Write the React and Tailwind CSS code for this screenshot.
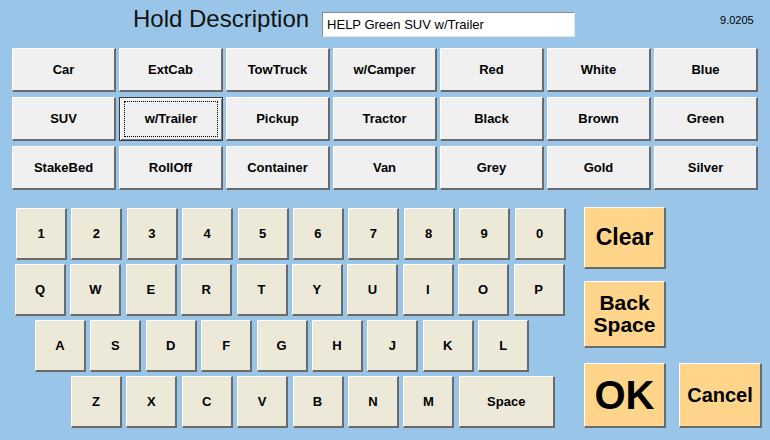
import React from 'react'

const categories = [
  'Car', 'ExtCab', 'TowTruck', 'w/Camper', 'Red', 'White', 'Blue',
  'SUV', 'w/Trailer', 'Pickup', 'Tractor', 'Black', 'Brown', 'Green',
  'StakeBed', 'RollOff', 'Container', 'Van', 'Grey', 'Gold', 'Silver',
]

const keyRows = [
  { pad: 'pl-[16px]', keys: ['1', '2', '3', '4', '5', '6', '7', '8', '9', '0'] },
  { pad: 'pl-[15px]', keys: ['Q', 'W', 'E', 'R', 'T', 'Y', 'U', 'I', 'O', 'P'] },
  { pad: 'pl-[35px]', keys: ['A', 'S', 'D', 'F', 'G', 'H', 'J', 'K', 'L'] },
  { pad: 'pl-[71px]', keys: ['Z', 'X', 'C', 'V', 'B', 'N', 'M'] },
]

const raised = 'border-t border-l border-t-white border-l-white border-r-2 border-b-2 border-r-[#6b6b6b] border-b-[#6b6b6b]'

function CategoryButton({ label }) {
  const focused = label === 'w/Trailer'
  if (focused) {
    return (
      <button className="relative flex h-[44px] items-center justify-center border border-[#3a3a3a] bg-[#f0f0f0] text-[13px] font-bold text-black shadow-[inset_1px_1px_0_#fff,inset_-1px_-1px_0_#7a7a7a]">
        <span className="pointer-events-none absolute inset-x-[4px] inset-y-[3px] border border-dotted border-black" />
        {label}
      </button>
    )
  }
  return (
    <button className={`flex h-[44px] items-center justify-center bg-[#f0f0f0] text-[13px] font-bold text-black ${raised}`}>
      {label}
    </button>
  )
}

function Key({ label, wide }) {
  return (
    <button className={`flex h-[52px] shrink-0 items-center justify-center bg-[#ece9d8] text-[13px] font-bold text-black ${wide ? 'w-[96px]' : 'w-[51px]'} ${raised}`}>
      {label}
    </button>
  )
}

export default function App() {
  return (
    <div className="h-[440px] w-[770px] overflow-hidden bg-[#99c6e8] font-['Liberation_Sans',Arial,sans-serif] text-black">
      {/* header */}
      <div className="flex h-[48px] items-start">
        <h1 className="ml-[133px] mt-[7px] text-[24px] leading-[24px] font-normal text-[#111]">Hold Description</h1>
        <div className="ml-[13px] mt-[12px] flex h-[25px] w-[253px] items-center border-t border-l border-t-[#8c8c8c] border-l-[#8c8c8c] border-r border-b border-r-[#e6e6e6] border-b-[#e6e6e6] bg-white pl-[4px] text-[13px] leading-none">
          HELP Green SUV w/Trailer
        </div>
        <span className="ml-[145px] mt-[15px] text-[11px] leading-none">9.0205</span>
      </div>

      {/* vehicle / colour presets */}
      <div className="ml-[12px] grid w-[746px] grid-cols-7 gap-x-[3px] gap-y-[5px]">
        {categories.map(c => <CategoryButton key={c} label={c} />)}
      </div>

      <div className="flex items-start">
        {/* keyboard */}
        <div className="mt-[18px] flex w-[568px] flex-col gap-[4px]">
          {keyRows.map((row, i) => (
            <div key={i} className={`flex gap-[4.4px] ${row.pad}`}>
              {row.keys.map(k => <Key key={k} label={k} />)}
              {i === 3 && <Key label="Space" wide />}
            </div>
          ))}
        </div>

        {/* actions */}
        <div className="ml-[16px] mt-[17px] flex flex-col">
          <button className={`flex h-[62px] w-[82px] items-center justify-center bg-[#fed58a] text-[23px] font-bold ${raised}`}>Clear</button>
          <button className={`mt-[12px] flex h-[67px] w-[82px] flex-col items-center justify-center bg-[#fed58a] text-[21px] font-bold ${raised}`}>
            <span className="block h-[22px] leading-[22px]">Back</span>
            <span className="block h-[22px] leading-[22px]">Space</span>
          </button>
          <div className="mt-[15px] flex gap-[13px]">
            <button className={`flex h-[65px] w-[82px] items-center justify-center bg-[#fed58a] text-[40px] font-bold ${raised}`}>OK</button>
            <button className={`flex h-[65px] w-[83px] items-center justify-center bg-[#fed58a] text-[20px] font-bold ${raised}`}>Cancel</button>
          </div>
        </div>
      </div>
    </div>
  )
}
